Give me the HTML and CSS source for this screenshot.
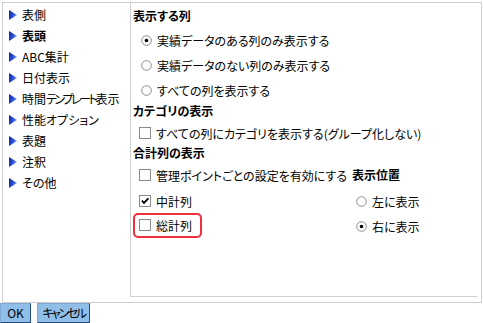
FILE: index.html
```html
<!DOCTYPE html>
<html lang="ja">
<head>
<meta charset="utf-8">
<link rel="stylesheet" href="styles.css">
</head>
<body>
<svg width="0" height="0" class="defs">
  <defs>
    <linearGradient id="tri" x1="0" y1="0" x2="1" y2="0.4">
      <stop offset="0" stop-color="#10208a"/>
      <stop offset="0.6" stop-color="#2c52d8"/>
      <stop offset="1" stop-color="#6f98ff"/>
    </linearGradient>
  </defs>
</svg>
<div class="frame">
  <ul class="nav">
    <li class="nav-item"><svg class="tri" width="8" height="10" viewBox="0 0 8 10"><polygon points="0,0 8,5 0,10" fill="url(#tri)"/></svg><span>表側</span></li>
    <li class="nav-item active"><svg class="tri" width="8" height="10" viewBox="0 0 8 10"><polygon points="0,0 8,5 0,10" fill="url(#tri)"/></svg><span>表頭</span></li>
    <li class="nav-item"><svg class="tri" width="8" height="10" viewBox="0 0 8 10"><polygon points="0,0 8,5 0,10" fill="url(#tri)"/></svg><span>ABC集計</span></li>
    <li class="nav-item"><svg class="tri" width="8" height="10" viewBox="0 0 8 10"><polygon points="0,0 8,5 0,10" fill="url(#tri)"/></svg><span>日付表示</span></li>
    <li class="nav-item"><svg class="tri" width="8" height="10" viewBox="0 0 8 10"><polygon points="0,0 8,5 0,10" fill="url(#tri)"/></svg><span>時間<span class="narrow">テンプレート</span>表示</span></li>
    <li class="nav-item"><svg class="tri" width="8" height="10" viewBox="0 0 8 10"><polygon points="0,0 8,5 0,10" fill="url(#tri)"/></svg><span>性能オプション</span></li>
    <li class="nav-item"><svg class="tri" width="8" height="10" viewBox="0 0 8 10"><polygon points="0,0 8,5 0,10" fill="url(#tri)"/></svg><span>表題</span></li>
    <li class="nav-item"><svg class="tri" width="8" height="10" viewBox="0 0 8 10"><polygon points="0,0 8,5 0,10" fill="url(#tri)"/></svg><span>注釈</span></li>
    <li class="nav-item"><svg class="tri" width="8" height="10" viewBox="0 0 8 10"><polygon points="0,0 8,5 0,10" fill="url(#tri)"/></svg><span>その他</span></li>
  </ul>
  <div class="panel">
    <div class="heading h-first">表示する列</div>
    <div class="opt m4"><svg class="radio" width="11" height="11" viewBox="0 0 11 11"><circle cx="5.5" cy="5.5" r="4.8" fill="#fff" stroke="#8a8a8a"/><circle cx="5.5" cy="5.5" r="1.8" fill="#000"/></svg><span>実績データのある列のみ表示する</span></div>
    <div class="opt m5"><svg class="radio" width="11" height="11" viewBox="0 0 11 11"><circle cx="5.5" cy="5.5" r="4.8" fill="#fff" stroke="#8a8a8a"/></svg><span>実績データのない列のみ表示する</span></div>
    <div class="opt m5"><svg class="radio" width="11" height="11" viewBox="0 0 11 11"><circle cx="5.5" cy="5.5" r="4.8" fill="#fff" stroke="#8a8a8a"/></svg><span>すべての列を表示する</span></div>
    <div class="heading m1">カテゴリの表示</div>
    <div class="opt m2"><svg class="check" width="12" height="12" viewBox="0 0 12 12"><rect x="0.5" y="0.5" width="11" height="11" fill="#fff" stroke="#8a8a8a"/></svg><span>すべての列にカテゴリを表示する(グループ化しない)</span></div>
    <div class="heading">合計列の表示</div>
    <div class="opt m2"><svg class="check" width="12" height="12" viewBox="0 0 12 12"><rect x="0.5" y="0.5" width="11" height="11" fill="#fff" stroke="#8a8a8a"/></svg><span>管理ポイントごとの設定を有効にする</span><span class="heading inline">表示位置</span></div>
    <div class="grid">
      <div class="opt m6"><svg class="check" width="12" height="12" viewBox="0 0 12 12"><rect x="0.5" y="0.5" width="11" height="11" fill="#fff" stroke="#8a8a8a"/><path d="M2.8 5.6 L5 7.9 L9.4 3.4" fill="none" stroke="#000" stroke-width="1.8"/></svg><span>中計列</span></div>
      <div class="opt m6 right"><svg class="radio" width="11" height="11" viewBox="0 0 11 11"><circle cx="5.5" cy="5.5" r="4.8" fill="#fff" stroke="#8a8a8a"/></svg><span>左に表示</span></div>
      <div class="opt m3"><span class="hl"><svg class="check" width="12" height="12" viewBox="0 0 12 12"><rect x="0.5" y="0.5" width="11" height="11" fill="#fff" stroke="#8a8a8a"/></svg><span>総計列</span></span></div>
      <div class="opt m5 right"><svg class="radio" width="11" height="11" viewBox="0 0 11 11"><circle cx="5.5" cy="5.5" r="4.8" fill="#fff" stroke="#8a8a8a"/><circle cx="5.5" cy="5.5" r="1.8" fill="#000"/></svg><span>右に表示</span></div>
    </div>
  </div>
</div>
<div class="buttons">
  <button class="btn ok">OK</button>
  <button class="btn cancel"><span class="narrow">キャンセル</span></button>
</div>
</body>
</html>
```

FILE: styles.css
```css
html, body {
  margin: 0;
  padding: 0;
  background: #fff;
}
body {
  width: 483px;
  height: 323px;
  overflow: hidden;
  font-family: "Noto Sans CJK JP", "Liberation Sans", sans-serif;
  font-size: 12px;
  color: #000;
  font-feature-settings: "palt";
}
.defs {
  position: absolute;
}
.frame {
  box-sizing: border-box;
  margin: 2px 0 0 2px;
  width: 480px;
  height: 301px;
  border: 1px solid #cfcfcf;
  display: flex;
}
.nav {
  list-style: none;
  margin: 0;
  padding: 1px 0 0 6px;
  width: 127px;
  box-sizing: border-box;
}
.nav-item {
  display: flex;
  align-items: center;
  height: 21px;
  gap: 5px;
  white-space: nowrap;
}
.nav-item.active span {
  font-weight: bold;
}
.narrow {
  letter-spacing: -2.4px;
}
.tri {
  flex: none;
}
.panel {
  box-sizing: border-box;
  width: 347px;
  margin: 0 0 5px 0;
  border-left: 1px solid #cfcfcf;
  border-bottom: 1px solid #cfcfcf;
  padding: 0 0 0 2px;
}
.heading {
  font-weight: bold;
  height: 20px;
  line-height: 20px;
}
.h-first {
  margin-top: 3px;
}
.heading.inline {
  margin-left: 0;
}
.opt {
  display: flex;
  align-items: center;
  height: 20px;
  gap: 5px;
  padding-left: 6px;
  white-space: nowrap;
}
.radio {
  margin-left: 2px;
  flex: none;
}
.check {
  flex: none;
}
.m1 { margin-top: 1px; }
.m2 { margin-top: 2px; }
.m3 { margin-top: 3px; }
.m4 { margin-top: 4px; }
.m5 { margin-top: 5px; }
.m6 { margin-top: 6px; }
.grid {
  display: grid;
  grid-template-columns: 221px 1fr;
  align-items: center;
}
.grid .right {
  padding-left: 0;
}
.hl {
  display: inline-flex;
  align-items: center;
  gap: 5px;
  height: 21px;
  margin-left: -6px;
  padding: 0 8px 0 4px;
  border: 2px solid #f0303c;
  border-radius: 5px;
}
.buttons {
  display: flex;
  gap: 6px;
}
.btn {
  font-family: "Noto Sans CJK JP", "Liberation Sans", sans-serif;
  font-feature-settings: "palt";
  font-size: 12px;
  height: 20px;
  padding: 0;
  margin: 0;
  white-space: nowrap;
  background: #8fbfe9;
  border: 1px solid #7fa8d4;
  border-right-color: #244d7c;
  border-bottom-color: #244d7c;
  color: #000;
  line-height: 18px;
}
.ok {
  width: 31px;
}
.cancel {
  width: 53px;
}
```
